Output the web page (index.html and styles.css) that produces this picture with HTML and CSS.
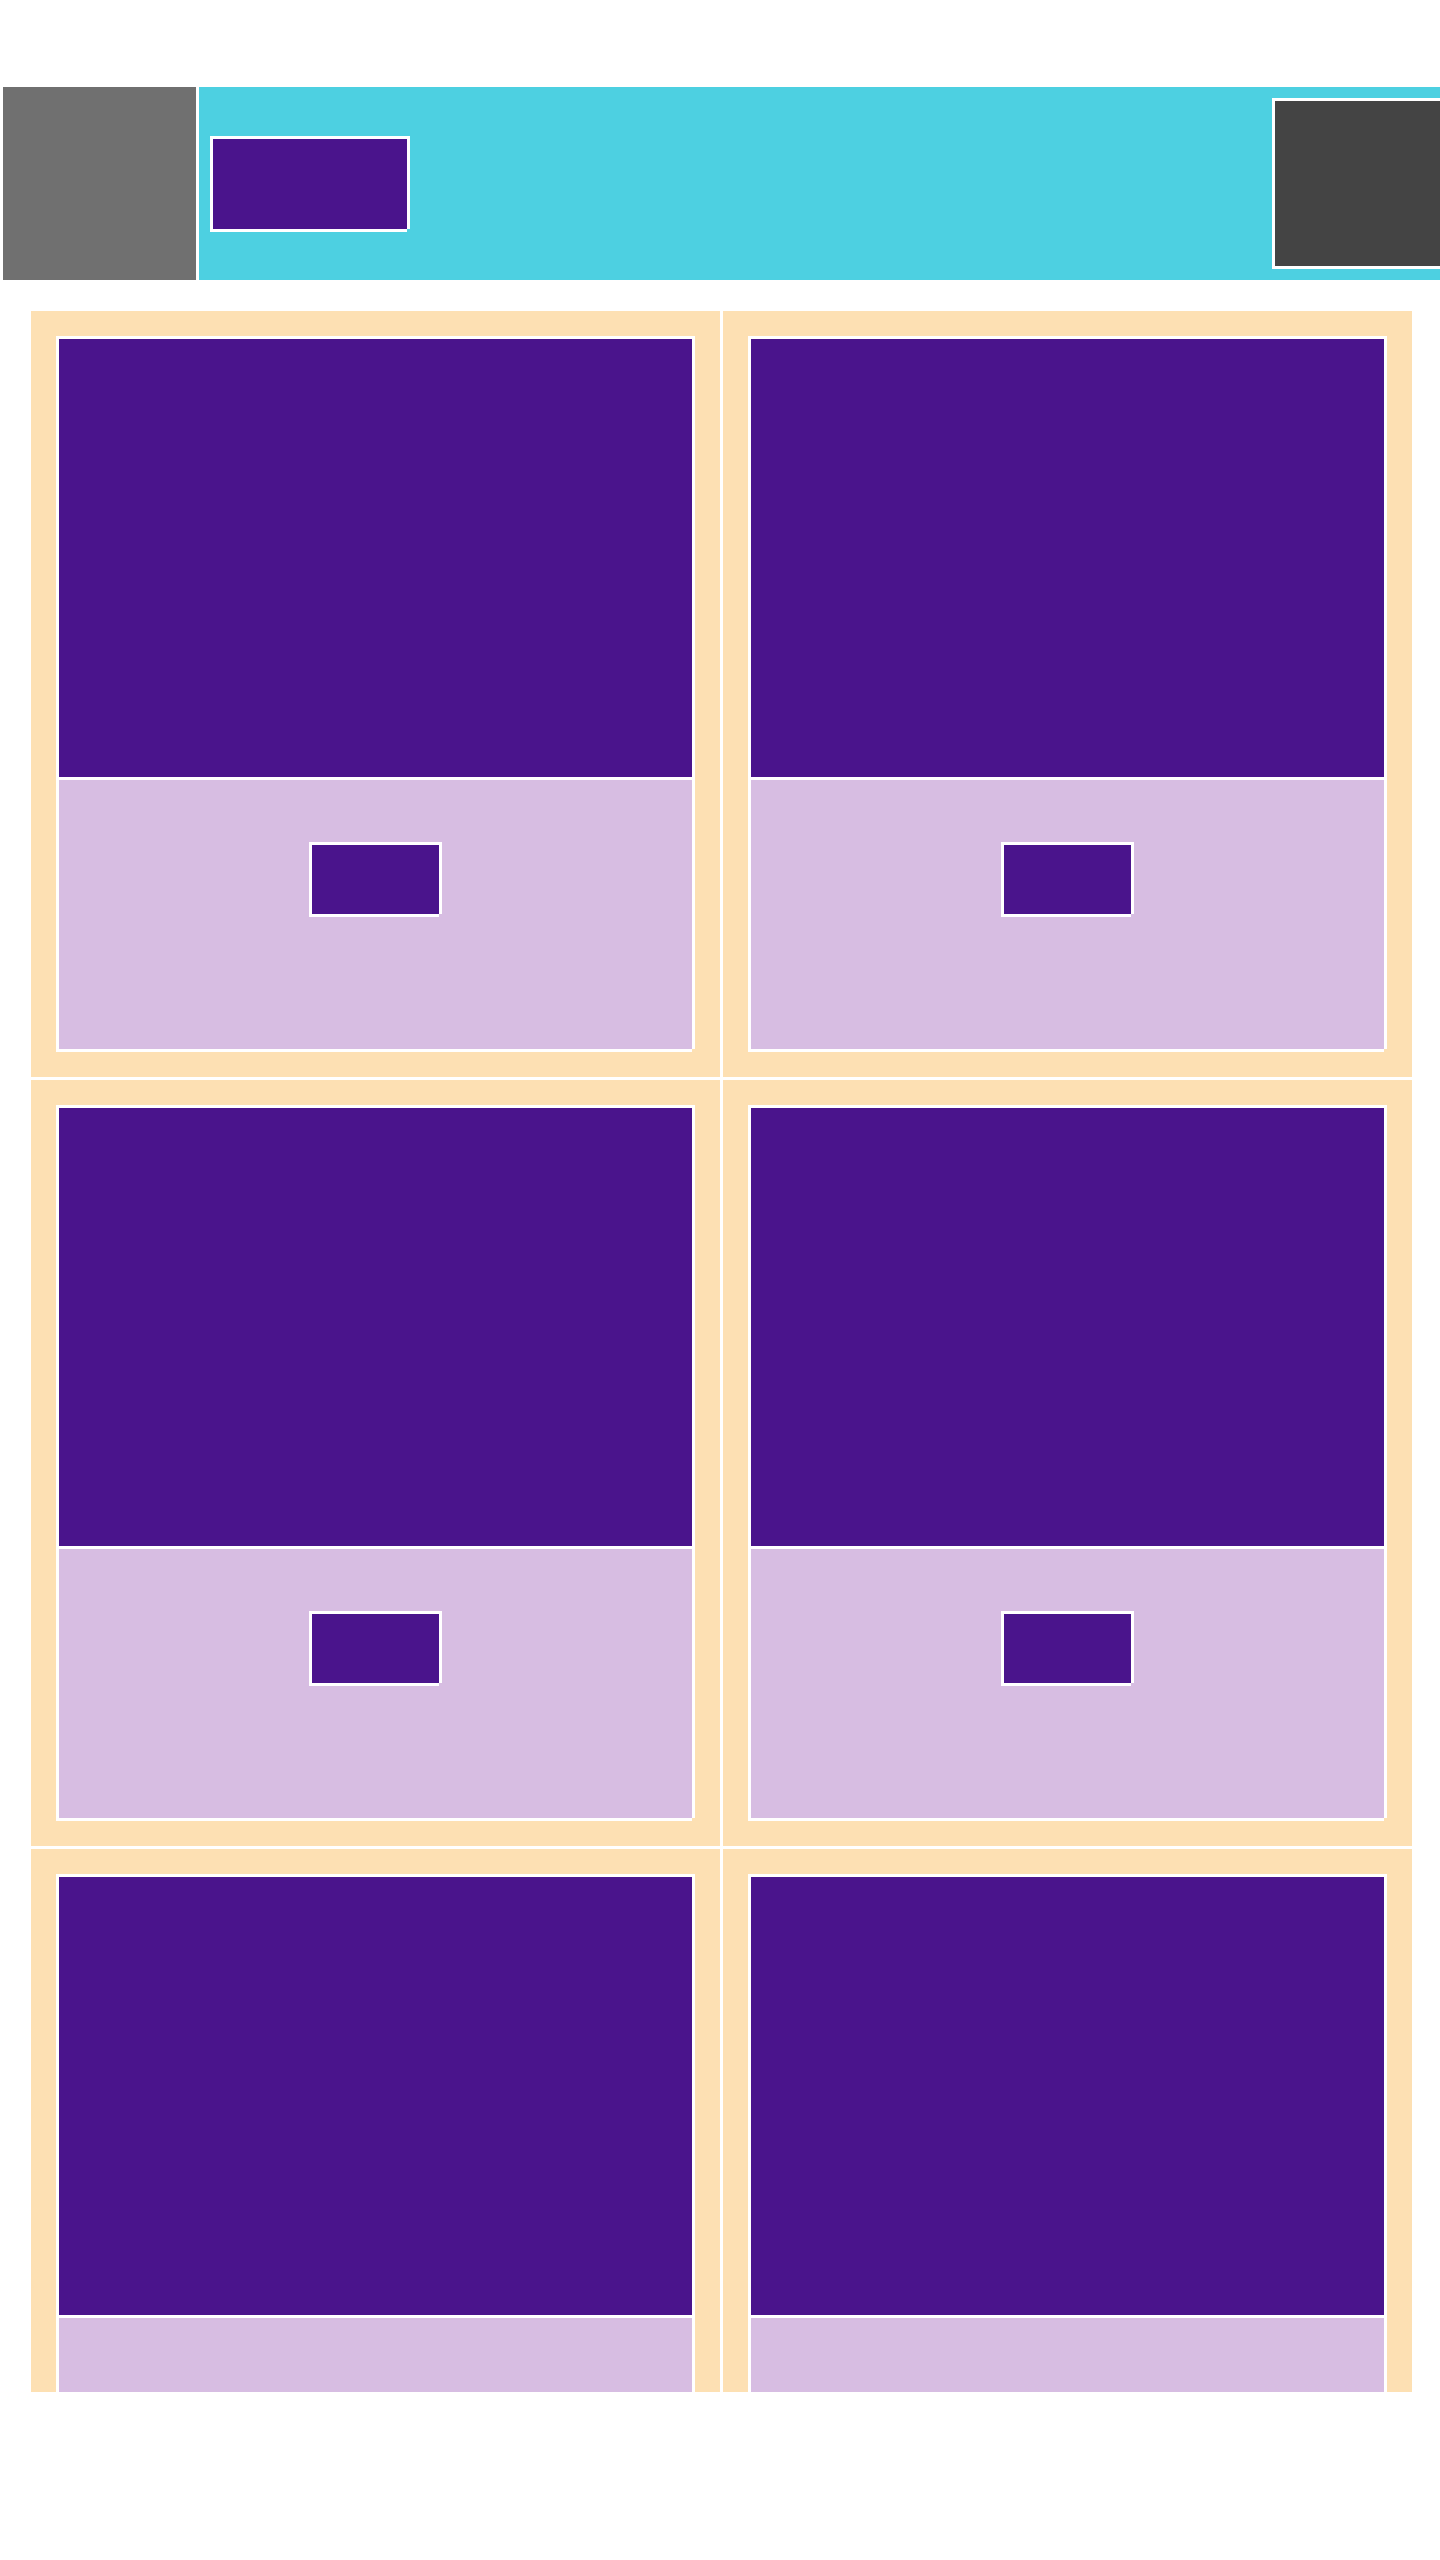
FILE: index.html
```html
<!DOCTYPE html>
<html lang="en">
<head>
<meta charset="utf-8">
<title>Grid</title>
<link rel="stylesheet" href="styles.css">
</head>
<body>
<div class="page">
  <header class="header">
    <div class="logo"></div>
    <div class="bar">
      <div class="head-btn nb"></div>
      <div class="dark"></div>
    </div>
  </header>
  <main class="grid">
    <div class="card"><div class="inner nb"><div class="media"></div><div class="body"><div class="btn nb"></div></div></div></div>
    <div class="card"><div class="inner nb"><div class="media"></div><div class="body"><div class="btn nb"></div></div></div></div>
    <div class="card"><div class="inner nb"><div class="media"></div><div class="body"><div class="btn nb"></div></div></div></div>
    <div class="card"><div class="inner nb"><div class="media"></div><div class="body"><div class="btn nb"></div></div></div></div>
    <div class="card"><div class="inner nb"><div class="media"></div><div class="body"></div></div></div>
    <div class="card"><div class="inner nb"><div class="media"></div><div class="body"></div></div></div>
  </main>
</div>
</body>
</html>
```
FILE: styles.css
```css
html, body {
  margin: 0;
  padding: 0;
  background: #ffffff;
  font-family: "Liberation Sans", Arial, sans-serif;
}

.page {
  padding-top: 87px;
  overflow: hidden;
}

.header {
  display: flex;
  height: 193px;
  gap: 3px;
  padding-left: 3px;
  overflow: hidden;
}

.logo {
  flex: none;
  width: 193px;
  background: #707070;
}

.bar {
  flex: 1;
  display: flex;
  align-items: center;
  padding-left: 11px;
  background: #4dd0e1;
  overflow: hidden;
}

/* white border on left/top/bottom, right strip that stops short of the bottom */
.nb {
  position: relative;
  border: 3px solid #ffffff;
  border-right: 0;
  margin-right: 3px;
  box-sizing: content-box;
}

.nb::after {
  content: "";
  position: absolute;
  top: -3px;
  right: -3px;
  bottom: 0;
  width: 3px;
  background: #ffffff;
}

.head-btn {
  flex: none;
  width: 194px;
  height: 90px;
  background: #4a148c;
}

.dark {
  flex: none;
  width: 200px;
  height: 165px;
  margin-left: 862px;
  border: 3px solid #ffffff;
  background: #444444;
}

.grid {
  display: grid;
  grid-template-columns: 689px 689px;
  grid-auto-rows: 766px;
  gap: 3px;
  width: 1381px;
  height: 2081px;
  margin: 31px 0 0 31px;
  overflow: hidden;
}

.card {
  background: #fde0b3;
  padding: 25px;
}

.inner {
  display: flex;
  flex-direction: column;
}

.media {
  height: 438px;
  background: #4a148c;
  border-bottom: 3px solid #ffffff;
}

.body {
  height: 207px;
  padding-top: 62px;
  display: flex;
  justify-content: center;
  align-items: flex-start;
  background: #d7bde2;
}

.btn {
  flex: none;
  width: 127px;
  height: 69px;
  background: #4a148c;
}
```
